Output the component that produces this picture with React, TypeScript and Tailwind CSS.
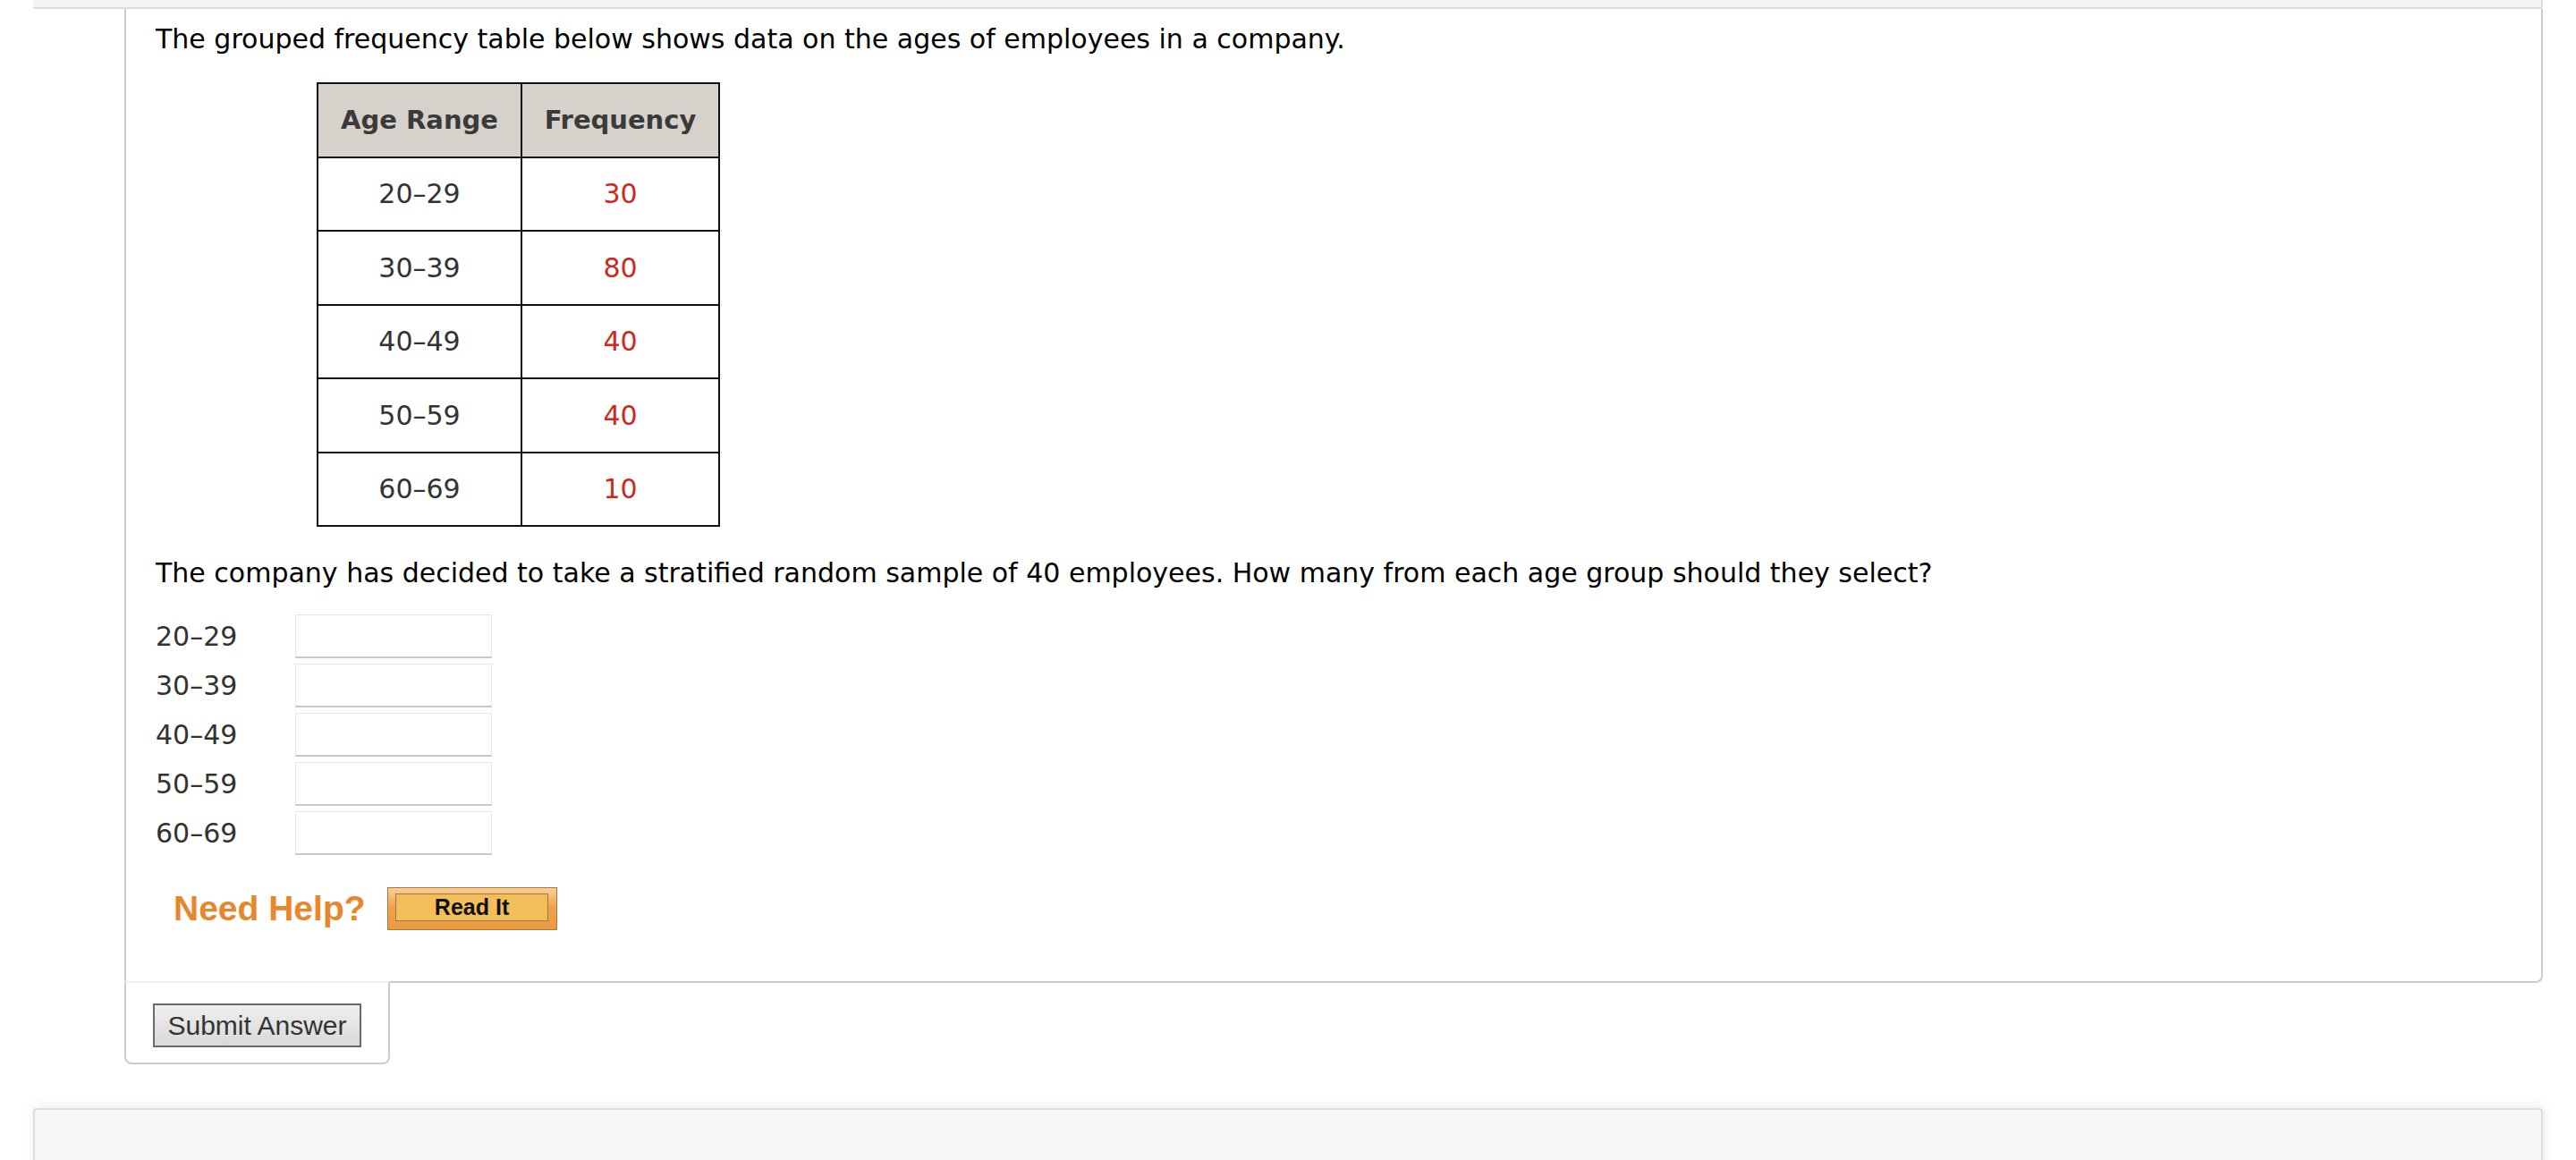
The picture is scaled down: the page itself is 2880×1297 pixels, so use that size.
import React from "react";

const rows = [
  { range: "20–29", freq: "30" },
  { range: "30–39", freq: "80" },
  { range: "40–49", freq: "40" },
  { range: "50–59", freq: "40" },
  { range: "60–69", freq: "10" },
];

export default function App() {
  return (
    <div className="relative h-[1297px] w-[2880px] overflow-hidden bg-white font-['Verdana','DejaVu_Sans',sans-serif]">
      {/* top strip */}
      <div className="ml-[37px] h-[10px] w-[2806px] rounded-br-[3px] border-b-2 border-r-2 border-[#dcdcdc] bg-[#f5f5f5]" />

      {/* main card */}
      <div className="ml-[139px] w-[2704px] rounded-br-[8px] border-x-2 border-b-2 border-[#cccccc] pb-[57px] pl-[33px] pt-[16px]">
        <p className="text-[30px] leading-[36px] text-black">
          The grouped frequency table below shows data on the ages of employees in a company.
        </p>

        <table className="ml-[180px] mt-[30px] border-collapse border-2 border-[#111]">
          <thead>
            <tr className="h-[82.5px] bg-[#d6d2cb]">
              <th className="w-[228px] border-2 border-[#111] p-0 text-center text-[29px] font-bold text-[#3a3a3a]">
                Age Range
              </th>
              <th className="w-[221px] border-2 border-[#111] p-0 text-center text-[29px] font-bold text-[#3a3a3a]">
                Frequency
              </th>
            </tr>
          </thead>
          <tbody>
            {rows.map((r) => (
              <tr key={r.range} className="h-[82.5px]">
                <td className="border-2 border-[#111] p-0 text-center text-[30px] text-[#333]">{r.range}</td>
                <td className="border-2 border-[#111] p-0 text-center text-[30px] text-[#cc2a1e]">{r.freq}</td>
              </tr>
            ))}
          </tbody>
        </table>

        <p className="mt-[34px] text-[30px] leading-[36px] text-black">
          The company has decided to take a stratified random sample of 40 employees. How many from each age group should they select?
        </p>

        <div className="mt-[28px] flex flex-col gap-[6px]">
          {rows.map((r) => (
            <div key={r.range} className="flex h-[49px] items-center">
              <span className="w-[156px] text-[30px] text-[#333]">{r.range}</span>
              <div className="h-[49px] w-[220px] border border-b-2 border-[#e6e6e6] border-b-[#c8c8c8] bg-white" />
            </div>
          ))}
        </div>

        <div className="ml-[20px] mt-[36px] flex h-[48px] items-center gap-[24px]">
          <span className="font-['Liberation_Sans',Arial,sans-serif] text-[39px] font-bold leading-[48px] text-[#e8862c]">
            Need Help?
          </span>
          <div className="flex h-[48px] w-[190px] items-start justify-center border border-[#ae7535] bg-gradient-to-b from-[#f8cf94] via-[#eea04a] to-[#eb9a42] pt-[6px]">
            <div className="flex h-[31px] w-[171px] items-center justify-center border border-[#a8763a] bg-[#f2bd5b] font-['Liberation_Sans',Arial,sans-serif] text-[25px] font-bold text-[#111]">
              Read It
            </div>
          </div>
        </div>
      </div>

      {/* submit box */}
      <div className="-mt-[2px] ml-[139px] w-[297px] rounded-b-[8px] border-x-2 border-b-2 border-t-2 border-[#cccccc] border-t-[#efefef] bg-white pb-[17px] pl-[30px] pt-[23px]">
        <button className="h-[49px] w-[233px] border-2 border-[#6a6a6a] bg-gradient-to-b from-[#efefef] to-[#d9d9d9] font-['Liberation_Sans',Arial,sans-serif] text-[30px] leading-[45px] text-[#333]">
          Submit Answer
        </button>
      </div>

      {/* bottom panel */}
      <div className="ml-[37px] mt-[49px] h-[80px] w-[2806px] rounded-t-[4px] border-x-2 border-t-2 border-[#dedede] bg-[#f6f6f6] shadow-[0_-6px_14px_rgba(0,0,0,0.04),4px_0_10px_rgba(0,0,0,0.05)]" />
    </div>
  );
}
